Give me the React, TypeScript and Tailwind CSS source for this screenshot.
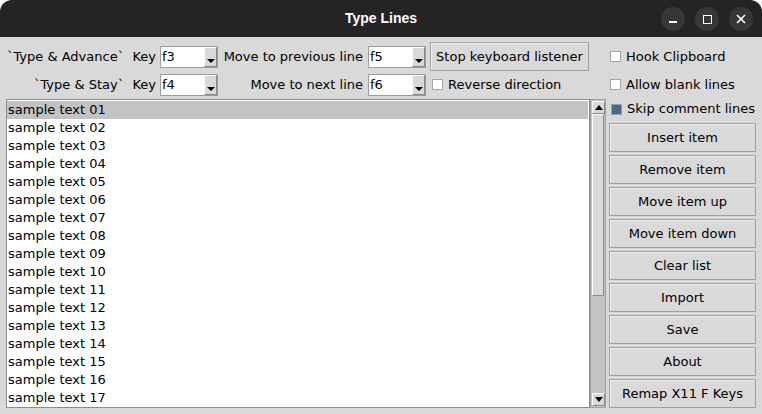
import React from "react";

const FONT = { fontFamily: '"DejaVu Sans", sans-serif' };

const ITEMS = Array.from({ length: 17 }, (_, i) => `sample text ${String(i + 1).padStart(2, "0")}`);

const BUTTONS = [
  "Insert item",
  "Remove item",
  "Move item up",
  "Move item down",
  "Clear list",
  "Import",
  "Save",
  "About",
  "Remap X11 F Keys",
];

function Combo({ value }: { value: string }) {
  return (
    <div className="flex h-[22px] w-[58px] border border-[#9c9c9c] bg-white">
      <span className="flex-1 pl-[1px] leading-[20px]">{value}</span>
      <div className="relative w-[13px] border-l border-t border-l-white border-t-white border-r border-b border-r-[#888] border-b-[#888] bg-[#d9d9d9]">
        <div className="absolute bottom-[3px] left-[2px] h-0 w-0 border-x-[4px] border-t-[4px] border-x-transparent border-t-black" />
      </div>
    </div>
  );
}

function Check({ label, checked = false }: { label: string; checked?: boolean }) {
  return (
    <div className="flex items-center">
      <div
        className={`ml-[2px] h-[11px] w-[11px] border ${
          checked ? "border-[#8aa0b4] bg-[#4a6984]" : "border-[#a5a5a5] bg-white"
        }`}
      />
      <span className="ml-[5px]">{label}</span>
    </div>
  );
}

function TkButton({ label, className = "" }: { label: string; className?: string }) {
  return (
    <div
      className={`flex items-center justify-center border border-[#9f9f9f] bg-[#d9d9d9] shadow-[inset_1px_1px_0_#f0f0f0] ${className}`}
    >
      {label}
    </div>
  );
}

function Arrow({ up }: { up?: boolean }) {
  return (
    <div className="flex h-[13px] w-[13px] items-center justify-center border border-t-white border-l-white border-r-[#8a8a8a] border-b-[#8a8a8a] bg-[#d9d9d9]">
      <div
        className={`h-0 w-0 border-x-[4px] border-x-transparent ${
          up ? "border-b-[5px] border-b-black" : "border-t-[5px] border-t-black"
        }`}
      />
    </div>
  );
}

export default function App() {
  return (
    <div className="h-[414px] w-[762px] overflow-hidden bg-white text-[13px] text-black" style={FONT}>
      <div className="flex h-full flex-col overflow-hidden rounded-t-[12px] bg-[#d9d9d9]">
        {/* title bar */}
        <div className="relative flex h-[37px] shrink-0 items-center justify-center bg-[#242424]">
          <span
            className="text-[14px] font-bold text-white"
            style={{ fontFamily: '"Liberation Sans", Arial, sans-serif' }}
          >
            Type Lines
          </span>
          <div className="absolute right-[9px] top-[7px] flex gap-[10px]">
            <div className="flex h-[24px] w-[24px] items-center justify-center rounded-full bg-[#373737]">
              <div className="mt-[6px] h-[2px] w-[8px] bg-white" />
            </div>
            <div className="flex h-[24px] w-[24px] items-center justify-center rounded-full bg-[#373737]">
              <div className="h-[9px] w-[9px] border-[1.5px] border-white" />
            </div>
            <div className="flex h-[24px] w-[24px] items-center justify-center rounded-full bg-[#373737]">
              <svg width="10" height="10" viewBox="0 0 10 10">
                <path d="M1 1 L9 9 M9 1 L1 9" stroke="white" strokeWidth="1.6" />
              </svg>
            </div>
          </div>
        </div>

        {/* row 1 */}
        <div className="mt-[5px] flex h-[29px] items-center">
          <div className="ml-[4px] w-[154px] whitespace-pre pr-[2px] text-right">{"`Type & Advance`  Key"}</div>
          <div className="ml-[2px]">
            <Combo value="f3" />
          </div>
          <div className="ml-[2px] w-[146px] pr-[3px] text-right">Move to previous line</div>
          <div className="ml-[2px]">
            <Combo value="f5" />
          </div>
          <TkButton label="Stop keyboard listener" className="ml-[4px] h-[29px] w-[159px]" />
          <div className="ml-[19px]">
            <Check label="Hook Clipboard" />
          </div>
        </div>

        {/* row 2 */}
        <div className="flex h-[27px] items-center">
          <div className="ml-[4px] w-[154px] whitespace-pre pr-[2px] text-right">{"`Type & Stay`  Key"}</div>
          <div className="ml-[2px]">
            <Combo value="f4" />
          </div>
          <div className="ml-[2px] w-[146px] pr-[3px] text-right">Move to next line</div>
          <div className="ml-[2px]">
            <Combo value="f6" />
          </div>
          <div className="ml-[4px] w-[159px]">
            <Check label="Reverse direction" />
          </div>
          <div className="ml-[19px]">
            <Check label="Allow blank lines" />
          </div>
        </div>

        {/* list + side panel */}
        <div className="mt-[1px] flex">
          <div className="ml-[6px] flex h-[309px]">
            <div className="h-full w-[584px] overflow-hidden border border-[#8c8c8c] bg-white pt-[1px]">
              {ITEMS.map((t, i) => (
                <div
                  key={t}
                  className={`h-[18px] pl-[1px] leading-[18px] ${i === 0 ? "mr-[1px] bg-[#c3c3c3]" : ""}`}
                >
                  {t}
                </div>
              ))}
            </div>
            <div className="flex h-full w-[16px] flex-col border border-[#a0a0a0] bg-[#c3c3c3] p-[1px]">
              <Arrow up />
              <div className="h-[182px] border border-t-white border-l-white border-r-[#8a8a8a] border-b-[#8a8a8a] bg-[#d9d9d9]" />
              <div className="flex-1" />
              <Arrow />
            </div>
          </div>

          <div className="ml-[3px] flex w-[147px] flex-col">
            <div className="flex h-[20px] items-center">
              <Check label="Skip comment lines" checked />
            </div>
            <div className="mt-[4px] flex flex-col gap-[3px]">
              {BUTTONS.map((b) => (
                <TkButton key={b} label={b} className="h-[29px] w-[147px]" />
              ))}
            </div>
          </div>
        </div>
      </div>
    </div>
  );
}
